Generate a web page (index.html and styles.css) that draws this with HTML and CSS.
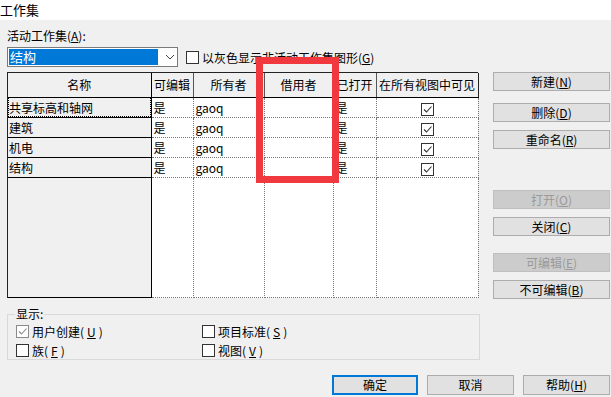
FILE: index.html
```html
<!DOCTYPE html>
<html lang="zh-CN">
<head>
<meta charset="utf-8">
<title>工作集</title>
<link rel="stylesheet" href="styles.css">
</head>
<body>
<div class="titlebar">工作集</div>
<div class="dialog">
  <div class="active-label">活动工作集(<u>A</u>):</div>
  <div class="select-row">
    <div class="combo">
      <div class="combo-sel">结构</div>
      <svg class="combo-arrow" width="10" height="6" viewBox="0 0 10 6"><path d="M1 1 L5 5 L9 1" fill="none" stroke="#444" stroke-width="1"/></svg>
    </div>
    <span class="cb"></span>
    <span class="cb-label">以灰色显示非活动工作集图形(<u>G</u>)</span>
  </div>

  <div class="main">
    <div class="grid-wrap">
      <table class="grid">
        <colgroup>
          <col class="c1"><col class="c2"><col class="c3"><col class="c4"><col class="c5"><col class="c6">
        </colgroup>
        <thead>
          <tr><th>名称</th><th>可编辑</th><th>所有者</th><th>借用者</th><th>已打开</th><th>在所有视图中可见</th></tr>
        </thead>
        <tbody>
          <tr><td class="name focus">共享标高和轴网</td><td>是</td><td>gaoq</td><td></td><td>是</td><td class="ck"><span class="cb on"><svg width="11" height="11" viewBox="0 0 11 11"><path d="M2 5.5 L4.5 8 L9.5 2.5" fill="none" stroke="#333" stroke-width="1.1"/></svg></span></td></tr>
          <tr><td class="name">建筑</td><td>是</td><td>gaoq</td><td></td><td>是</td><td class="ck"><span class="cb on"><svg width="11" height="11" viewBox="0 0 11 11"><path d="M2 5.5 L4.5 8 L9.5 2.5" fill="none" stroke="#333" stroke-width="1.1"/></svg></span></td></tr>
          <tr><td class="name">机电</td><td>是</td><td>gaoq</td><td></td><td>是</td><td class="ck"><span class="cb on"><svg width="11" height="11" viewBox="0 0 11 11"><path d="M2 5.5 L4.5 8 L9.5 2.5" fill="none" stroke="#333" stroke-width="1.1"/></svg></span></td></tr>
          <tr><td class="name">结构</td><td>是</td><td>gaoq</td><td></td><td>是</td><td class="ck"><span class="cb on"><svg width="11" height="11" viewBox="0 0 11 11"><path d="M2 5.5 L4.5 8 L9.5 2.5" fill="none" stroke="#333" stroke-width="1.1"/></svg></span></td></tr>
          <tr class="filler"><td class="name"></td><td></td><td></td><td></td><td></td><td></td></tr>
        </tbody>
      </table>
    </div>
    <div class="side">
      <button class="btn b-new">新建(<u>N</u>)</button>
      <button class="btn b-del">删除(<u>D</u>)</button>
      <button class="btn b-ren">重命名(<u>R</u>)</button>
      <button class="btn b-open" disabled>打开(<u>O</u>)</button>
      <button class="btn b-close">关闭(<u>C</u>)</button>
      <button class="btn b-edit" disabled>可编辑(<u>E</u>)</button>
      <button class="btn b-noedit">不可编辑(<u>B</u>)</button>
    </div>
  </div>

  <fieldset class="group">
    <legend>显示:</legend>
    <div class="opts">
      <label class="opt"><span class="cb dim"><svg width="11" height="11" viewBox="0 0 11 11"><path d="M2 5.5 L4.5 8 L9.5 2.5" fill="none" stroke="#8a8a8a" stroke-width="1.1"/></svg></span>用户创建(<u>U</u>)</label>
      <label class="opt"><span class="cb"></span>项目标准(<u>S</u>)</label>
      <label class="opt"><span class="cb"></span>族(<u>F</u>)</label>
      <label class="opt"><span class="cb"></span>视图(<u>V</u>)</label>
    </div>
  </fieldset>

  <div class="footer">
    <button class="btn fbtn default">确定</button>
    <button class="btn fbtn">取消</button>
    <button class="btn fbtn">帮助(<u>H</u>)</button>
  </div>
</div>
<div class="mark"></div>
</body>
</html>
```
FILE: styles.css
```css
* { box-sizing: border-box; }
html, body { margin: 0; padding: 0; }
body {
  width: 611px;
  height: 397px;
  overflow: hidden;
  background: #f0f0f0;
  font-family: "Noto Sans CJK SC", "Microsoft YaHei", sans-serif;
  font-size: 12px;
  color: #000;
}
u { text-decoration: underline; text-underline-offset: 1px; }

.titlebar {
  height: 20px;
  background: #fff;
  font-size: 13px;
  line-height: 19px;
  padding-left: 0;
}
.dialog { padding: 0 1px 0 7px; }

.active-label {
  margin-top: 9px;
  height: 14px;
  line-height: 14px;
}

.select-row {
  display: flex;
  align-items: center;
  margin-top: 4px;
  height: 20px;
}
.combo {
  width: 171px;
  height: 20px;
  border: 1px solid #7a7a7a;
  background: #fff;
  display: flex;
  align-items: center;
  padding: 1px;
}
.combo-sel {
  width: 149px;
  height: 16px;
  background: #0078d7;
  color: #fff;
  font-size: 13px;
  line-height: 16px;
  padding-left: 1px;
}
.combo-arrow { margin-left: 7px; }

.cb {
  display: inline-flex;
  align-items: center;
  justify-content: center;
  width: 13px;
  height: 13px;
  border: 1px solid #333;
  background: #fff;
  flex: none;
}
.cb.dim { border-color: #8a8a8a; }
.select-row .cb { margin-left: 8px; }
.cb-label { margin-left: 3px; }

.main {
  display: flex;
  margin-top: 5px;
  align-items: flex-start;
}
.grid-wrap {
  width: 471px;
  height: 226px;
  border-left: 1px solid #222;
  border-top: 1px solid #222;
  background: #fff;
}
.grid {
  width: 470px;
  height: 225px;
  border-collapse: collapse;
  table-layout: fixed;
}
.grid col.c1 { width: 143px; }
.grid col.c2 { width: 42px; }
.grid col.c3 { width: 71px; }
.grid col.c4 { width: 69px; }
.grid col.c5 { width: 43px; }
.grid col.c6 { width: 102px; }
.grid th {
  height: 24px;
  padding: 0;
  font-weight: normal;
  text-align: center;
  background: #f0f0f0;
  border-right: 1px solid #555;
  border-bottom: 1px solid #000;
  white-space: nowrap;
}
.grid th:first-child { border-right: 1px solid #000; }
.grid th:last-child { border-right: 1px solid #222; }
.grid td {
  height: 20px;
  padding: 0 0 0 2px;
  white-space: nowrap;
  border-right: 1px dotted #777;
  border-bottom: 1px dotted #777;
  background: #fff;
}
.grid td.name {
  background: #f0f0f0;
  border-right: 1px solid #000;
  border-bottom: 1px solid #000;
  padding-left: 1px;
}
.grid td.name.focus { outline: 1px dotted #000; outline-offset: -1px; }
.grid td.ck { text-align: center; padding: 0; }
.grid td.ck .cb { vertical-align: middle; }
.grid tr.filler td { height: auto; }

.side {
  margin-left: 15px;
  width: 117px;
  display: flex;
  flex-direction: column;
}
.btn {
  font-family: inherit;
  font-size: 12px;
  color: #000;
  background: #e1e1e1;
  border: 1px solid #adadad;
  padding: 0;
  margin: 0;
  height: 19px;
  line-height: 16px;
  text-align: center;
}
.btn:disabled {
  background: #cccccc;
  border-color: #bfbfbf;
  color: #9a9a9a;
}
.side .btn { width: 117px; }
.b-new { margin-top: 0; }
.b-del { margin-top: 12px; }
.b-ren { margin-top: 8px; }
.b-open { margin-top: 41px; }
.b-close { margin-top: 8px; }
.b-edit { margin-top: 17px; }
.b-noedit { margin-top: 8px; }

.group {
  margin: 8px 0 0 0;
  width: 473px;
  height: 53px;
  border: 1px solid #d9d9d9;
  padding: 0 6px 0 8px;
}
.group legend {
  padding: 0 1px;
  margin-left: -1px;
  line-height: 14px;
}
.opts {
  display: grid;
  grid-template-columns: 186px 200px;
  grid-auto-rows: 19px;
  margin-top: 1px;
}
.opt {
  display: flex;
  align-items: center;
  gap: 3px;
}

.footer {
  display: flex;
  justify-content: flex-end;
  gap: 9px;
  margin-top: 15px;
  padding-right: 0;
}
.fbtn { width: 87px; height: 20px; }
.fbtn.default { border: 2px solid #0078d7; width: 86px; }

.mark {
  position: absolute;
  left: 256px;
  top: 57px;
  width: 83px;
  height: 126px;
  border: 7px solid #f0383e;
}
```
